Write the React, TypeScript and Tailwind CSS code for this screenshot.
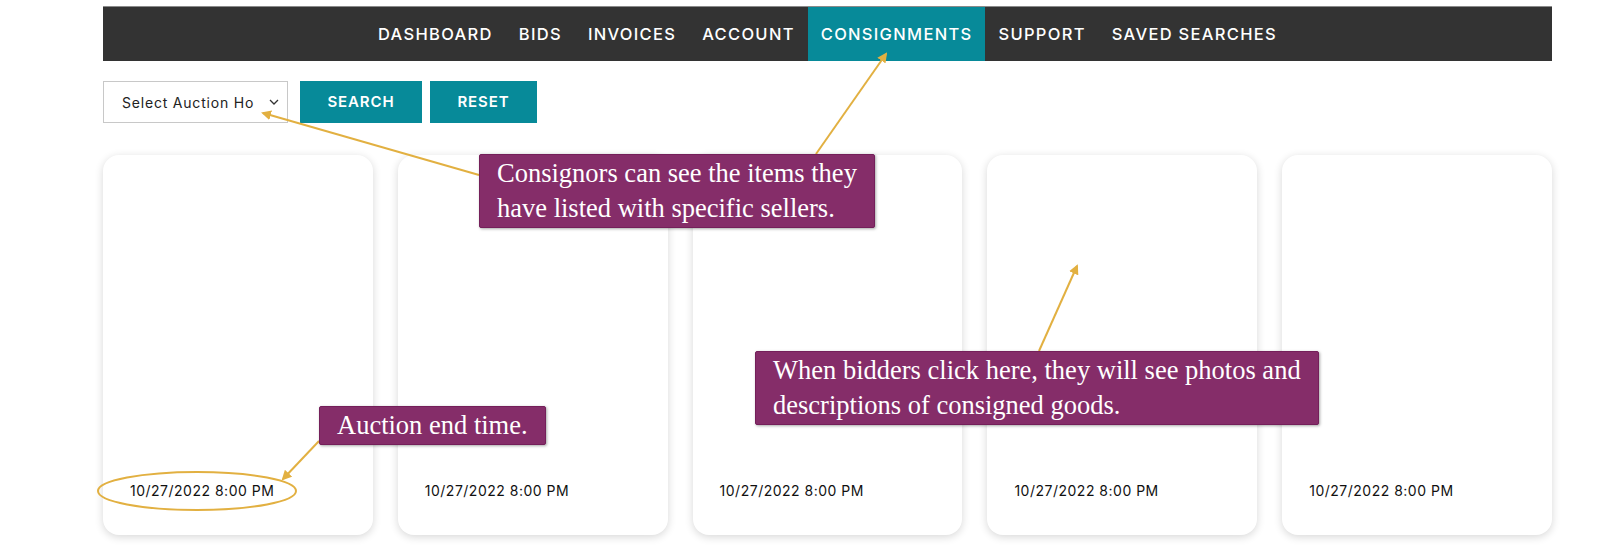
const navItems = ['DASHBOARD', 'BIDS', 'INVOICES', 'ACCOUNT', 'CONSIGNMENTS', 'SUPPORT', 'SAVED SEARCHES'];

const cards = [1, 2, 3, 4, 5];

const arrows = [
  { x1: 816, y1: 154, x2: 886, y2: 54 },
  { x1: 479, y1: 175, x2: 263, y2: 113 },
  { x1: 319, y1: 441, x2: 283, y2: 479 },
  { x1: 1039, y1: 351, x2: 1077, y2: 266 },
];

function Arrows() {
  return (
    <svg className="absolute inset-0 pointer-events-none" width="1600" height="559" viewBox="0 0 1600 559">
      <defs>
        <marker id="head" markerWidth="10" markerHeight="10" refX="8" refY="5" orient="auto" markerUnits="userSpaceOnUse">
          <path d="M0,0 L10,5 L0,10 z" fill="#e2b041" />
        </marker>
      </defs>
      {arrows.map((a, i) => (
        <line key={i} x1={a.x1} y1={a.y1} x2={a.x2} y2={a.y2} stroke="#e2b041" strokeWidth="2" markerEnd="url(#head)" />
      ))}
      <ellipse cx="197" cy="491" rx="99" ry="19" fill="none" stroke="#e2b041" strokeWidth="2" />
    </svg>
  );
}

function Note({ children, className }: { children: React.ReactNode; className: string }) {
  return (
    <div
      className={
        'absolute bg-[#852d69] border border-[#741f5a] rounded-[2px] shadow-[1px_1px_3px_rgba(0,0,0,0.35)] px-[17px] py-px text-white text-[26.5px] leading-[35px] whitespace-nowrap font-["Liberation_Serif",serif] ' +
        className
      }
    >
      {children}
    </div>
  );
}

export default function App() {
  return (
    <div className="relative w-[1600px] h-[559px] bg-white overflow-hidden font-['Inter',sans-serif]">
      <div className="pl-[103px] pr-[48px] pt-[6px]">
        <nav className="h-[55px] bg-[#333333] border-t border-[#8a8a8a] flex justify-center">
          {navItems.map((item) => (
            <div
              key={item}
              className={
                item === 'CONSIGNMENTS'
                  ? 'flex items-center px-[13px] bg-[#078a99] text-white text-[16.5px] font-medium tracking-[1.3px]'
                  : 'flex items-center px-[13px] text-white text-[16.5px] font-medium tracking-[1.3px]'
              }
            >
              {item}
            </div>
          ))}
        </nav>

        <div className="mt-[20px] flex items-center">
          <div className="w-[185px] h-[42px] border border-[#c8c8c8] flex items-center pl-[18px] pr-[8px] text-[14px] tracking-[0.8px] text-[#222]">
            <span className="whitespace-nowrap">Select Auction Ho</span>
            <svg className="ml-auto" width="10" height="6" viewBox="0 0 10 6">
              <path d="M1 1 L5 5 L9 1" fill="none" stroke="#333" strokeWidth="1.3" />
            </svg>
          </div>
          <button className="ml-[12px] w-[122px] h-[42px] bg-[#078a99] text-white text-[15px] font-semibold tracking-[0.9px]">SEARCH</button>
          <button className="ml-[8px] w-[107px] h-[42px] bg-[#078a99] text-white text-[15px] font-semibold tracking-[0.9px]">RESET</button>
        </div>

        <div className="mt-[32px] grid grid-cols-5 gap-[25px]">
          {cards.map((c) => (
            <div
              key={c}
              className="h-[380px] rounded-[16px] bg-white shadow-[0_2px_8px_rgba(0,0,0,0.16)] flex flex-col justify-end px-[27px] pb-[34px]"
            >
              <span className="text-[14px] leading-[20px] tracking-[0.5px] text-[#111]">10/27/2022 8:00 PM</span>
            </div>
          ))}
        </div>
      </div>

      <Arrows />

      <Note className="left-[479px] top-[154px]">
        Consignors can see the items they
        <br />
        have listed with specific sellers.
      </Note>
      <Note className="left-[319px] top-[406px]">Auction end time.</Note>
      <Note className="left-[755px] top-[351px]">
        When bidders click here, they will see photos and
        <br />
        descriptions of consigned goods.
      </Note>
    </div>
  );
}
